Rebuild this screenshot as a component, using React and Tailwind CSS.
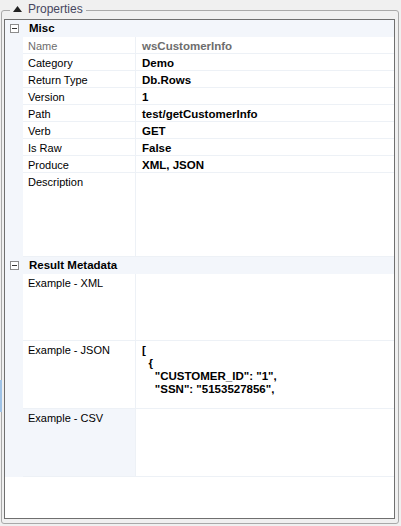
import React from 'react';

const rows = [
  { name: 'Name', value: 'wsCustomerInfo', readOnly: true },
  { name: 'Category', value: 'Demo' },
  { name: 'Return Type', value: 'Db.Rows' },
  { name: 'Version', value: '1' },
  { name: 'Path', value: 'test/getCustomerInfo' },
  { name: 'Verb', value: 'GET' },
  { name: 'Is Raw', value: 'False' },
  { name: 'Produce', value: 'XML, JSON' },
];

function Expander() {
  return (
    <div className="w-[9px] h-[9px] border border-[#8c8c8c] bg-white flex items-center justify-center">
      <div className="w-[5px] h-px bg-[#333]" />
    </div>
  );
}

function Category({ title }) {
  return (
    <div className="flex h-[17px] items-center bg-[#f3f6fb]">
      <div className="w-[18px] flex justify-center pl-px">
        <Expander />
      </div>
      <span className="pl-[6px] font-bold text-black text-[11.5px]">{title}</span>
    </div>
  );
}

function Row({ name, value, readOnly, height = 'h-[17px]', selected, children }) {
  return (
    <div className={`flex ${height}`}>
      <div className="w-[18px] bg-[#f3f6fb]" />
      <div className={`w-[113px] border-b border-r border-[#edf1f6] pl-[5px] ${selected ? 'bg-[#f3f6fb]' : 'bg-white'} ${readOnly ? 'text-[#6d6d6d]' : 'text-black'}`}>
        <div className="leading-[16px] pt-px">{name}</div>
      </div>
      <div className={`flex-1 border-b border-[#edf1f6] pl-[6px] font-bold text-[11.5px] ${readOnly ? 'text-[#6d6d6d]' : 'text-black'}`}>
        {children || <div className="leading-[16px] pt-px">{value}</div>}
      </div>
    </div>
  );
}

export default function App() {
  return (
    <div className="w-[401px] h-[526px] bg-[#f0f0f0] relative text-[11px] overflow-hidden" style={{ fontFamily: '"Liberation Sans", Arial, sans-serif' }}>
      <div className="absolute left-0 top-[380px] w-[2px] h-[32px] bg-[#9fc3e7]" />
      <div className="pt-[10px] pl-px">
        <div className="w-[398px] h-[514px] border border-[#a9a9a9] rounded-[3px] pt-[8px] pl-[2px]">
          <div className="w-[391px] h-[500px] border border-[#6f6f6f] bg-white">
            <Category title="Misc" />
            {rows.map((r) => (
              <Row key={r.name} {...r} />
            ))}
            <Row name="Description" value="" height="h-[84px]" />
            <Category title="Result Metadata" />
            <Row name="Example - XML" value="" height="h-[67px]" />
            <Row name="Example - JSON" height="h-[68px]">
              <div className="leading-[13px] pt-[3px] whitespace-pre">
                <div>[</div>
                <div>{'  {'}</div>
                <div>{'    "CUSTOMER_ID": "1",'}</div>
                <div>{'    "SSN": "5153527856",'}</div>
              </div>
            </Row>
            <Row name="Example - CSV" value="" height="h-[68px]" selected />
          </div>
        </div>
      </div>
      <div className="absolute left-[10px] top-[2px] px-[3px] bg-[#f0f0f0] flex items-center gap-[6px] text-[#474761] text-[12px]">
        <svg width="9" height="6" viewBox="0 0 9 6"><path d="M0 6 L4.5 0 L9 6 Z" fill="#222" /></svg>
        <span className="leading-[14px]">Properties</span>
      </div>
    </div>
  );
}
